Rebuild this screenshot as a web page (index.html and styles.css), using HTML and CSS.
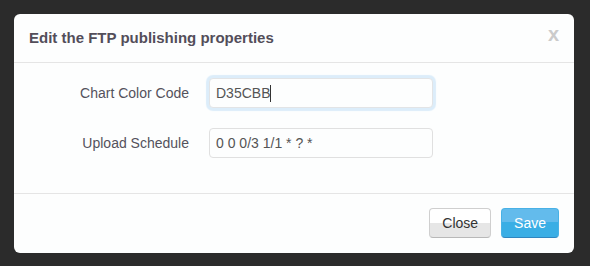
FILE: index.html
```html
<!DOCTYPE html>
<html>
<head>
<meta charset="utf-8">
<link rel="stylesheet" href="styles.css">
</head>
<body>
<div class="modal">
  <div class="modal-header">
    <h3 class="modal-title">Edit the FTP publishing properties</h3>
    <span class="close">x</span>
  </div>
  <div class="modal-body">
    <div class="control-group">
      <label class="control-label">Chart Color Code</label>
      <div class="controls">
        <div class="input-wrap">
          <input class="text-input focused" type="text" value="D35CBB">
          <span class="caret-mark"></span>
        </div>
      </div>
    </div>
    <div class="control-group">
      <label class="control-label">Upload Schedule</label>
      <div class="controls">
        <input class="text-input" type="text" value="0 0 0/3 1/1 * ? *">
      </div>
    </div>
  </div>
  <div class="modal-footer">
    <button class="btn btn-default">Close</button>
    <button class="btn btn-primary">Save</button>
  </div>
</div>
</body>
</html>
```

FILE: styles.css
```css
html, body {
  margin: 0;
  padding: 0;
}
body {
  background: #2b2b2b;
  font-family: "Liberation Sans", Arial, sans-serif;
  width: 590px;
  height: 266px;
  overflow: hidden;
  padding: 14px;
  box-sizing: border-box;
}
.modal {
  width: 560px;
  background: #fdfefe;
  border-radius: 6px;
}
.modal-header {
  display: flex;
  justify-content: space-between;
  align-items: flex-start;
  padding: 9px 15px;
  border-bottom: 1px solid #e5e5e5;
}
.modal-title {
  margin: 0;
  font-size: 15px;
  font-weight: bold;
  line-height: 30px;
  color: #534e5a;
}
.close {
  font-size: 20px;
  font-weight: bold;
  line-height: 20px;
  color: #cbcbcb;
  margin-top: 1px;
}
.modal-body {
  padding: 15px;
}
.control-group {
  display: flex;
  margin-bottom: 20px;
}
.control-label {
  width: 160px;
  margin-right: 20px;
  padding-top: 5px;
  text-align: right;
  font-size: 14px;
  line-height: 20px;
  color: #54525c;
}
.input-wrap {
  position: relative;
}
.text-input {
  display: block;
  box-sizing: border-box;
  width: 224px;
  height: 30px;
  margin: 0;
  padding: 4px 6px;
  border: 1px solid #e0e0e0;
  border-radius: 4px;
  background: #fdfefe;
  font-family: "Liberation Sans", Arial, sans-serif;
  font-size: 14px;
  line-height: 20px;
  color: #555;
  outline: none;
}
.text-input.focused {
  border-color: #e2e4e6;
  box-shadow: 0 0 1px 3px #dcedfa;
}
.caret-mark {
  position: absolute;
  left: 61px;
  top: 7px;
  width: 1px;
  height: 17px;
  background: #333;
}
.modal-footer {
  display: flex;
  justify-content: flex-end;
  gap: 10px;
  padding: 14px 15px 15px;
  border-top: 1px solid #e5e5e5;
}
.btn {
  margin: 0;
  padding: 4px 12px;
  font-family: "Liberation Sans", Arial, sans-serif;
  font-size: 14px;
  line-height: 20px;
  border-radius: 4px;
  border: 1px solid;
}
.btn-default {
  color: #333;
  background: linear-gradient(#ffffff 0%, #ffffff 50%, #e6e6e6 50%, #e6e6e6 100%);
  border-color: #cfcfcf #cfcfcf #b8b8b8;
}
.btn-primary {
  color: #fff;
  background: linear-gradient(#63bbec 0%, #63bbec 45%, #3aaee5 45%, #3aaee5 100%);
  border-color: #48b1e6 #48b1e6 #2f86c0;
}
```
